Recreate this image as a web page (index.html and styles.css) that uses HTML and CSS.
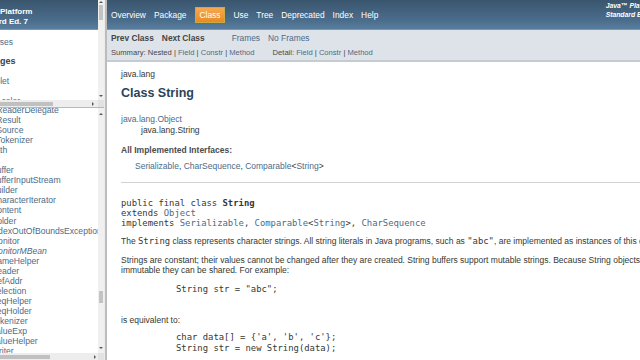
FILE: index.html
```html
<!DOCTYPE html>
<html lang="en">
<head>
<meta charset="utf-8">
<title>String (Java Platform SE 7)</title>
<link rel="stylesheet" href="styles.css">
</head>
<body>
<div class="frameset">
  <div class="left">
    <div class="frame frame-top">
      <div class="view">
        <div class="overview">
          <h1 class="bar"><strong>Java™&nbsp;Platform<br>Standard&nbsp;Ed.&nbsp;7</strong></h1>
          <div class="idx-header"><a href="#">All Classes</a></div>
          <h2 class="pk-title">Packages</h2>
          <ul class="pk-list">
            <li><a href="#">java.applet</a></li>
            <li><a href="#">java.awt</a></li>
            <li><a href="#">java.awt.color</a></li>
          </ul>
        </div>
      </div>
      <div class="vscroll vs-top"><span class="arr-up"></span><span class="thumb-v"></span><span class="arr-down"></span></div>
      <div class="hscroll hs-top"><span class="thumb-h"></span><span class="arr-right"></span></div>
      <div class="corner"></div>
    </div>
    <div class="hsplit"></div>
    <div class="frame frame-bottom">
      <div class="view">
        <ul class="class-list">
          <li><a href="#">StreamReaderDelegate</a></li>
          <li><a href="#">StreamResult</a></li>
          <li><a href="#">StreamSource</a></li>
          <li><a href="#">StreamTokenizer</a></li>
          <li><a href="#">StrictMath</a></li>
          <li><a href="#">String</a></li>
          <li><a href="#">StringBuffer</a></li>
          <li><a href="#">StringBufferInputStream</a></li>
          <li><a href="#">StringBuilder</a></li>
          <li><a href="#">StringCharacterIterator</a></li>
          <li><a href="#">StringContent</a></li>
          <li><a href="#">StringHolder</a></li>
          <li><a href="#">StringIndexOutOfBoundsException</a></li>
          <li><a href="#">StringMonitor</a></li>
          <li><a href="#" class="iface">StringMonitorMBean</a></li>
          <li><a href="#">StringNameHelper</a></li>
          <li><a href="#">StringReader</a></li>
          <li><a href="#">StringRefAddr</a></li>
          <li><a href="#">StringSelection</a></li>
          <li><a href="#">StringSeqHelper</a></li>
          <li><a href="#">StringSeqHolder</a></li>
          <li><a href="#">StringTokenizer</a></li>
          <li><a href="#">StringValueExp</a></li>
          <li><a href="#">StringValueHelper</a></li>
          <li><a href="#">StringWriter</a></li>
        </ul>
      </div>
      <div class="vscroll vs-bottom"><span class="arr-up"></span><span class="thumb-v"></span><span class="arr-down"></span></div>
      <div class="hscroll hs-bottom"><span class="thumb-h"></span><span class="arr-right"></span></div>
      <div class="corner"></div>
    </div>
  </div>
  <div class="vsplit"></div>
  <div class="right">
    <div class="topnav">
      <ul class="navlist">
        <li><a href="#">Overview</a></li>
        <li><a href="#">Package</a></li>
        <li class="rev">Class</li>
        <li><a href="#">Use</a></li>
        <li><a href="#">Tree</a></li>
        <li><a href="#">Deprecated</a></li>
        <li><a href="#">Index</a></li>
        <li><a href="#">Help</a></li>
      </ul>
      <div class="about"><strong>Java™&nbsp;Platform<br>Standard&nbsp;Ed.&nbsp;7</strong></div>
    </div>
    <div class="subnav">
      <div class="subrow row1">
        <ul class="prevnext">
          <li><a href="#">Prev Class</a></li>
          <li><a href="#">Next Class</a></li>
        </ul>
        <ul class="frames">
          <li><a href="#">Frames</a></li>
          <li><a href="#">No Frames</a></li>
        </ul>
      </div>
      <div class="subrow row2">
        <ul>
          <li>Summary:&nbsp;</li>
          <li>Nested&nbsp;|&nbsp;</li>
          <li><a href="#">Field</a>&nbsp;|&nbsp;</li>
          <li><a href="#">Constr</a>&nbsp;|&nbsp;</li>
          <li><a href="#">Method</a></li>
        </ul>
        <ul class="detail">
          <li>Detail:&nbsp;</li>
          <li><a href="#">Field</a>&nbsp;|&nbsp;</li>
          <li><a href="#">Constr</a>&nbsp;|&nbsp;</li>
          <li><a href="#">Method</a></li>
        </ul>
      </div>
    </div>
    <div class="content">
      <div class="pkg">java.lang</div>
      <h2 class="title">Class String</h2>
      <div class="inherit">
        <a href="#">java.lang.Object</a>
        <div class="sub">java.lang.String</div>
      </div>
      <dl class="impl">
        <dt>All Implemented Interfaces:</dt>
        <dd><a href="#">Serializable</a>, <a href="#">CharSequence</a>, <a href="#">Comparable</a>&lt;<a href="#">String</a>&gt;</dd>
      </dl>
      <hr class="rule">
      <pre class="sig">public final class <b>String</b>
extends <a href="#">Object</a>
implements <a href="#">Serializable</a>, <a href="#">Comparable</a>&lt;<a href="#">String</a>&gt;, <a href="#">CharSequence</a></pre>
      <p class="p1">The <code>String</code> class represents character strings. All string literals in Java programs, such as <code>"abc"</code>, are implemented as instances of this class.</p>
      <p class="p2">Strings are constant; their values cannot be changed after they are created. String buffers support mutable strings. Because String objects are immutable they can be shared. For example:</p>
      <pre class="ex ex1">String str = "abc";</pre>
      <p class="p3">is equivalent to:</p>
      <pre class="ex ex2">char data[] = {'a', 'b', 'c'};
String str = new String(data);</pre>
    </div>
  </div>
</div>
</body>
</html>
```

FILE: styles.css
```css
* { box-sizing: border-box; }
html, body { margin: 0; padding: 0; }
body {
  width: 640px;
  height: 360px;
  overflow: hidden;
  background: #ffffff;
  font-family: "Liberation Sans", Arial, sans-serif;
  color: #353833;
}
a { color: #4c6b87; text-decoration: none; }
ul { list-style: none; margin: 0; padding: 0; }

.frameset { display: flex; height: 360px; }
.left { flex: 0 0 104px; display: flex; flex-direction: column; }
.vsplit { flex: 0 0 3px; background: #bcbcbc; border-left: 1px solid #ececec; }
.right { flex: 0 0 575px; display: flex; flex-direction: column; }

/* frames with drawn scrollbars */
.frame {
  display: grid;
  grid-template-columns: 98px 6px;
  grid-template-rows: 1fr 7px;
  min-height: 0;
}
.frame-top { height: 107px; flex: 0 0 107px; }
.hsplit { flex: 0 0 1px; background: #b8b8b8; }
.frame-bottom { flex: 1; }
.view { overflow: hidden; min-height: 0; background: #fff; }
.vscroll { background: #f0f0f0; display: flex; flex-direction: column; align-items: center; }
.hscroll { background: #ededed; display: flex; align-items: center; }
.corner { background: #e2e2e2; }
.thumb-v { width: 4px; background: #c3c3c3; }
.thumb-h { height: 4px; background: #c0c0c0; }
.arr-up {
  width: 0; height: 0;
  border-left: 2px solid transparent; border-right: 2px solid transparent;
  border-bottom: 2px solid #5a5a5a;
}
.arr-down {
  width: 0; height: 0;
  border-left: 2px solid transparent; border-right: 2px solid transparent;
  border-top: 2px solid #5a5a5a;
  margin-top: auto;
}
.arr-right {
  width: 0; height: 0;
  border-top: 2px solid transparent; border-bottom: 2px solid transparent;
  border-left: 2px solid #5a5a5a;
  margin-left: auto;
}
.vs-top .arr-up { margin-top: 1px; }
.vs-top .thumb-v { margin-top: 2px; height: 15px; }
.vs-top .arr-down { margin-bottom: 3px; }
.hs-top .thumb-h { width: 53px; }
.hs-top .arr-right { margin-right: 4px; }
.vs-bottom .arr-up { margin-top: 5px; }
.vs-bottom .thumb-v { margin-top: 176px; height: 12px; }
.vs-bottom .arr-down { margin-bottom: 4px; }
.hs-bottom .thumb-h { width: 50px; }
.hs-bottom .arr-right { margin-right: 2px; }

/* overview frame (scrolled horizontally) */
.overview { width: 200px; margin-left: -40px; }
.bar {
  margin: 0;
  height: 30px;
  padding: 7px 0 0 12px;
  background: linear-gradient(#3a556e, #4b6d8c 70%, #587d9d);
  border-bottom: 1px solid #7b97b0;
  color: #fff;
  font-size: 8px;
  line-height: 9.5px;
  font-weight: bold;
}
.idx-header { margin-top: 7px; padding-left: 11px; font-size: 8.5px; line-height: 10px; }
.pk-title {
  margin: 8.5px 0 0;
  padding-left: 14px;
  font-size: 9px;
  line-height: 11px;
  font-weight: bold;
  color: #2c4557;
}
.pk-list { margin-top: 9.5px; padding-left: 8px; font-size: 8.5px; line-height: 10px; }

/* all classes frame */
.class-list {
  margin: -3px 0 0 -31.5px;
  font-size: 8.6px;
  line-height: 10.04px;
  white-space: nowrap;
}
.iface { font-style: italic; }

/* right frame */
.topnav {
  height: 30px;
  flex: 0 0 30px;
  display: flex;
  align-items: flex-start;
  background: linear-gradient(#3a556e, #4b6d8c 70%, #587d9d);
  border-bottom: 1px solid #7b97b0;
  color: #fff;
}
.navlist { display: flex; padding-top: 7px; font-size: 8.4px; line-height: 10px; }
.navlist li { padding: 3px 4px 2px; }
.navlist a { color: #fff; }
.navlist .rev {
  margin: 0 4px;
  padding: 2px 4px;
  border: 1px solid #c9aa44;
  background: linear-gradient(#f6a94f, #ea8a22);
  color: #fff;
}
.about {
  margin-left: auto;
  padding: 1px 25px 0 0;
  font-size: 6.8px;
  line-height: 9px;
  font-style: italic;
  white-space: nowrap;
}

.subnav {
  flex: 0 0 32px;
  height: 32px;
  padding-top: 2px;
  background: #dee3e9;
  border-bottom: 2px solid #c5cbd2;
}
.subrow { display: flex; }
.row1 { font-size: 8.4px; line-height: 12px; }
.row1 li { padding: 0 4px; }
.prevnext { display: flex; font-weight: bold; }
.prevnext a { color: #454545; }
.frames { display: flex; margin-left: 19px; }
.row2 { margin-top: 4px; padding-left: 4px; font-size: 7.6px; line-height: 10px; color: #474747; }
.row2 ul { display: flex; }
.row2 .detail { margin-left: 18px; }

.content { padding: 7px 14px 0; font-size: 8.5px; line-height: 10px; }
.title {
  margin: 6.5px 0 0;
  font-size: 12.5px;
  line-height: 15px;
  font-weight: bold;
  color: #2c4557;
}
.inherit { margin-top: 13.5px; line-height: 11px; }
.inherit .sub { padding-left: 20px; }
.impl { margin: 8.5px 0 0; }
.impl dt { font-weight: bold; color: #4c4c4c; }
.impl dd { margin: 6px 0 0 14px; }
.rule { margin: 11px 0 0; border: 0; border-top: 1px solid #d2d2d2; height: 0; }
pre {
  font-family: "DejaVu Sans Mono", "Liberation Mono", monospace;
  font-size: 8.9px;
  line-height: 10.3px;
  margin: 0;
}
.sig { margin-top: 15px; }
code { font-family: "DejaVu Sans Mono", "Liberation Mono", monospace; font-size: 8.9px; line-height: 1; }
p { margin: 0; }
.p1 { margin-top: 8px; }
.p2 { margin-top: 9px; }
.ex { padding-left: 55px; }
.ex1 { margin-top: 9px; }
.p3 { margin-top: 20.7px; }
.ex2 { margin-top: 7px; }
```
